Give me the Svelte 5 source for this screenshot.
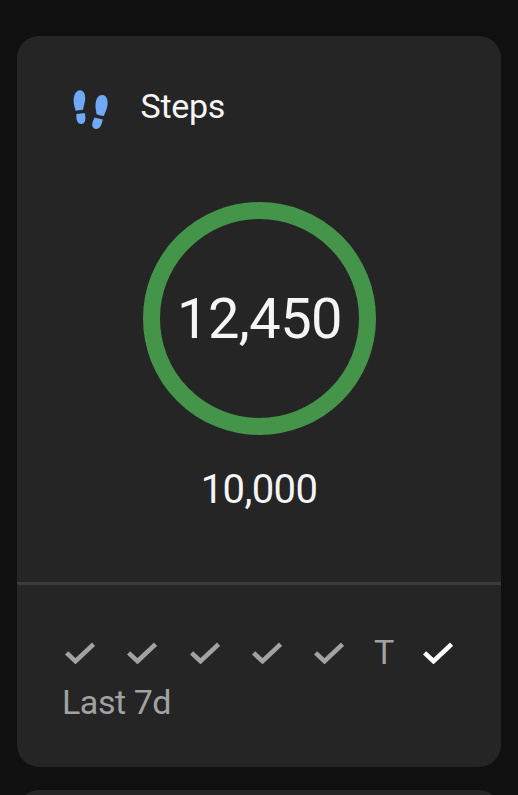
<script>
  const days = ['check', 'check', 'check', 'check', 'check', 'T', 'today'];
</script>

<main>
  <section class="card">
    <header>
      <svg class="feet" viewBox="0 0 40 44" width="40" height="44" aria-hidden="true">
        <path d="M9.8 4.2C13.5 4 15.5 8 15.2 12.8C15 16.8 13.6 19.8 13 23.8C10.5 24.2 7.8 24.4 5.6 24.7C4.9 21.2 3.4 18.5 3.6 14C3.8 8.8 6.2 4.4 9.8 4.2Z" />
        <path d="M6.4 28.1L14.7 26.9C16 32.3 15.7 37 11.9 38C7.7 38.8 5.8 34.2 6.4 28.1Z" />
        <path d="M32.6 9C36.3 9.3 38 13.6 37.6 18.3C37.2 23.4 35.2 26.1 33.8 30.1C31.4 29.8 28.8 29.2 26.6 28.3C26.3 24.5 24.9 21.6 25.6 17.2C26.2 12.2 28.8 8.7 32.6 9Z" />
        <path d="M24.7 31.4L32.7 33.5C31.8 39.4 29.3 43.5 25.6 42.9C21.2 41.9 21.3 37 24.7 31.4Z" />
      </svg>
      <h1>Steps</h1>
    </header>
    <div class="ring"><span>12,450</span></div>
    <div class="goal">10,000</div>
    <footer>
      <div class="days">
        {#each days as day}
          {#if day === 'T'}
            <span class="letter">T</span>
          {:else}
            <svg class:today={day === 'today'} viewBox="0 0 30 22" width="30" height="22" aria-hidden="true">
              <polyline points="1.6,10.9 10.5,19.2 28.6,2.2" />
            </svg>
          {/if}
        {/each}
      </div>
      <div class="range">Last 7d</div>
    </footer>
  </section>
  <section class="card next"></section>
</main>

<style>
  :global(body) {
    margin: 0;
    background: #101010;
  }
  main {
    box-sizing: border-box;
    height: 795px;
    padding: 36px 17px 0;
    overflow: hidden;
    display: flex;
    flex-direction: column;
    gap: 23px;
    font-family: Roboto, sans-serif;
    color: #f5f5f5;
  }
  .card {
    flex: none;
    box-sizing: border-box;
    height: 731px;
    border-radius: 22px;
    background: #252525;
    display: flex;
    flex-direction: column;
    align-items: center;
  }
  header {
    align-self: stretch;
    display: flex;
    align-items: flex-start;
    height: 166px;
    box-sizing: border-box;
    padding: 50px 0 0 53px;
  }
  .feet {
    fill: #70a9f6;
  }
  h1 {
    margin: 0 0 0 30.6px;
    font-size: 34px;
    line-height: 40px;
    font-weight: 400;
    letter-spacing: -0.35px;
  }
  .ring {
    box-sizing: border-box;
    width: 233px;
    height: 233px;
    margin-left: 1px;
    border: 17px solid #449549;
    border-radius: 50%;
    display: flex;
    align-items: center;
    justify-content: center;
    font-size: 56px;
    line-height: 66px;
    letter-spacing: -0.6px;
  }
  .goal {
    margin-top: 31px;
    height: 116px;
    font-size: 40px;
    line-height: 47px;
    letter-spacing: -0.6px;
  }
  footer {
    align-self: stretch;
    border-top: 3px solid #3b3b3b;
    padding: 47px 46px 0 45px;
    color: #a2a2a2;
  }
  .days {
    display: flex;
    align-items: center;
    gap: 32.3px;
    height: 40px;
    margin-left: 3px;
  }
  .days svg {
    flex: none;
    margin-top: 1px;
    fill: none;
    stroke: #a2a2a2;
    stroke-width: 4.6;
  }
  .days svg.today {
    stroke: #fff;
    margin-left: -3px;
  }
  .letter {
    width: 20px;
    margin-left: -2.5px;
    font-size: 34px;
    line-height: 40px;
  }
  .range {
    margin-top: 10px;
    font-size: 34px;
    line-height: 40px;
    letter-spacing: -0.45px;
  }
</style>
